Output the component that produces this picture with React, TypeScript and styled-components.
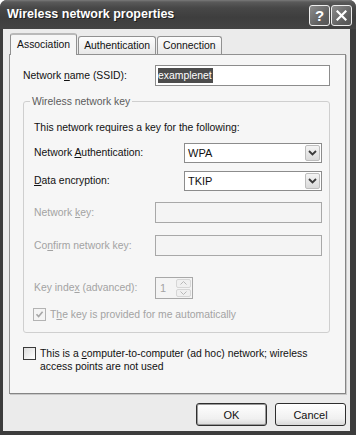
import styled, { createGlobalStyle, css } from 'styled-components';

const GlobalStyle = createGlobalStyle`
  html, body {
    margin: 0;
    padding: 0;
    background: #ffffff;
  }
  body {
    font-family: 'Liberation Sans', Arial, sans-serif;
    font-size: 10.4px;
    color: #111111;
  }
`;

export default function App() {
  return (
    <>
      <GlobalStyle />
      <StyledWindow>
        {/* Title bar */}
        <StyledTitleBar>
          <StyledTitleText>Wireless network properties</StyledTitleText>
          <StyledCaptionButton aria-label='help'>?</StyledCaptionButton>
          <StyledCaptionButton aria-label='close'>
            <svg width='11' height='11' viewBox='0 0 11 11'>
              <path
                d='M1.5 1.5 L9.5 9.5 M9.5 1.5 L1.5 9.5'
                stroke='#ffffff'
                strokeWidth='2.2'
                strokeLinecap='square'
              />
            </svg>
          </StyledCaptionButton>
        </StyledTitleBar>

        <StyledBody>
          {/* Tabs */}
          <StyledTabStrip>
            <StyledTab $active>Association</StyledTab>
            <StyledTab>Authentication</StyledTab>
            <StyledTab>Connection</StyledTab>
          </StyledTabStrip>

          <StyledPanel>
            {/* SSID */}
            <StyledRow $height={21}>
              <StyledLabel $width={132}>
                Network <u>n</u>ame (SSID):
              </StyledLabel>
              <StyledTextBox>
                <StyledSelection>examplenet</StyledSelection>
              </StyledTextBox>
            </StyledRow>

            {/* Wireless network key */}
            <StyledGroup>
              <StyledLegend>Wireless network key</StyledLegend>
              <StyledGroupText>
                This network requires a key for the following:
              </StyledGroupText>

              <StyledRow $height={20} $gap={9}>
                <StyledLabel $width={150}>
                  Network <u>A</u>uthentication:
                </StyledLabel>
                <ComboBox value='WPA' />
              </StyledRow>

              <StyledRow $height={20} $gap={8}>
                <StyledLabel $width={150}>
                  <u>D</u>ata encryption:
                </StyledLabel>
                <ComboBox value='TKIP' />
              </StyledRow>

              <StyledRow $height={21} $gap={11}>
                <StyledLabel $width={121} $disabled>
                  Network <u>k</u>ey:
                </StyledLabel>
                <StyledTextBox $disabled />
              </StyledRow>

              <StyledRow $height={21} $gap={12}>
                <StyledLabel $width={121} $disabled>
                  Co<u>n</u>firm network key:
                </StyledLabel>
                <StyledTextBox $disabled />
              </StyledRow>

              <StyledRow $height={22} $gap={21}>
                <StyledLabel $width={121} $disabled>
                  Key inde<u>x</u> (advanced):
                </StyledLabel>
                <StyledSpinner>
                  <StyledSpinValue>1</StyledSpinValue>
                  <StyledSpinButtons>
                    <StyledSpinButton>
                      <svg width='7' height='4' viewBox='0 0 7 4'>
                        <path d='M0.5 3.5 L3.5 0.5 L6.5 3.5' stroke='#b8b8b8' fill='none' />
                      </svg>
                    </StyledSpinButton>
                    <StyledSpinButton>
                      <svg width='7' height='4' viewBox='0 0 7 4'>
                        <path d='M0.5 0.5 L3.5 3.5 L6.5 0.5' stroke='#b8b8b8' fill='none' />
                      </svg>
                    </StyledSpinButton>
                  </StyledSpinButtons>
                </StyledSpinner>
              </StyledRow>

              <StyledCheckRow $gap={9} $indent={-1}>
                <StyledCheckBox $disabled>
                  <svg width='9' height='9' viewBox='0 0 9 9'>
                    <path
                      d='M1.5 4.2 L3.6 6.5 L7.6 1.8'
                      stroke='#a6a6a6'
                      strokeWidth='1.6'
                      fill='none'
                    />
                  </svg>
                </StyledCheckBox>
                <StyledCheckText $disabled>
                  T<u>h</u>e key is provided for me automatically
                </StyledCheckText>
              </StyledCheckRow>
            </StyledGroup>

            {/* Ad hoc */}
            <StyledCheckRow $gap={14} $indent={0}>
              <StyledCheckBox />
              <StyledCheckText $width={270}>
                This is a <u>c</u>omputer-to-computer (ad hoc) network; wireless
                access points are not used
              </StyledCheckText>
            </StyledCheckRow>
          </StyledPanel>

          {/* Dialog buttons */}
          <StyledButtonRow>
            <StyledButton $isDefault>OK</StyledButton>
            <StyledButton>Cancel</StyledButton>
          </StyledButtonRow>
        </StyledBody>
      </StyledWindow>
    </>
  );
}

function ComboBox({ value }: { value: string }) {
  return (
    <StyledCombo>
      <StyledComboValue>{value}</StyledComboValue>
      <StyledDropButton>
        <svg width='9' height='6' viewBox='0 0 9 6'>
          <path
            d='M1 1 L4.5 4.5 L8 1'
            stroke='#3a3a3a'
            strokeWidth='1.8'
            fill='none'
          />
        </svg>
      </StyledDropButton>
    </StyledCombo>
  );
}

const StyledWindow = styled.div`
  width: 356px;
  height: 435px;
  display: flex;
  flex-direction: column;
  background: #3c3c3c;
  border-radius: 7px 7px 0 0;
  overflow: hidden;
`;

const StyledTitleBar = styled.div`
  height: 29px;
  flex: none;
  display: flex;
  align-items: center;
  padding: 0 4px 0 7px;
  background: linear-gradient(
    #7a7a7a 0,
    #5a5a5a 2px,
    #474747 8px,
    #3e3e3e 60%,
    #444444 100%
  );
  color: #ffffff;
  font: bold 12.5px 'Liberation Sans', Arial, sans-serif;
`;

const StyledTitleText = styled.div`
  flex: 1;
  text-shadow: 1px 1px 0 #1e1e1e;
  padding-bottom: 1px;
`;

const StyledCaptionButton = styled.div`
  width: 21px;
  height: 21px;
  box-sizing: border-box;
  margin-left: 1px;
  margin-top: 1px;
  border: 1px solid #eeeeee;
  border-radius: 3px;
  background: linear-gradient(135deg, #8c8c8c, #5e5e5e 70%, #555555);
  display: flex;
  align-items: center;
  justify-content: center;
  color: #ffffff;
  font: bold 15px 'Liberation Sans', Arial, sans-serif;
`;

const StyledBody = styled.div`
  flex: 1;
  display: flex;
  flex-direction: column;
  margin: 0 6px 4px 3px;
  padding: 4px 4px 5px 6px;
  background: #ebebeb;
`;

const StyledTabStrip = styled.div`
  height: 21px;
  display: flex;
  align-items: flex-end;
  padding-left: 1px;
  position: relative;
  z-index: 1;
`;

const StyledTab = styled.div<{ $active?: boolean }>`
  height: 18px;
  box-sizing: border-box;
  display: flex;
  align-items: center;
  padding: 0 5px;
  margin-right: 1px;
  border: 1px solid #919191;
  border-bottom: none;
  border-radius: 3px 3px 0 0;
  background: linear-gradient(#fdfdfd, #e8e8e8);
  ${({ $active }) =>
    $active &&
    css`
      height: 22px;
      margin-bottom: -1px;
      padding: 0 6px 2px;
      background: #f6f6f6;
      border-top: 2px solid #b9b9b9;
    `}
`;

const StyledPanel = styled.div`
  flex: 1;
  display: flex;
  flex-direction: column;
  padding: 10px 15px 0 13px;
  background: #f6f6f6;
  border: 1px solid #919191;
  border-right-color: #858585;
  border-bottom-color: #858585;
  box-shadow: 1px 1px 0 #c8c8c8;
`;

const StyledRow = styled.div<{ $height: number; $gap?: number }>`
  display: flex;
  align-items: center;
  height: ${({ $height }) => $height}px;
  margin-top: ${({ $gap }) => $gap ?? 0}px;
`;

const StyledLabel = styled.div<{ $width: number; $disabled?: boolean }>`
  width: ${({ $width }) => $width}px;
  flex: none;
  color: ${({ $disabled }) => ($disabled ? '#a3a3a3' : '#111111')};
  padding-bottom: 1px;
`;

const StyledTextBox = styled.div<{ $disabled?: boolean }>`
  flex: 1;
  align-self: stretch;
  display: flex;
  align-items: center;
  padding: 0 2px;
  border: 1px solid #8c8c8c;
  background: #ffffff;
  ${({ $disabled }) =>
    $disabled &&
    css`
      border-color: #a8a8a8;
      background: #f4f4f4;
    `}
`;

const StyledSelection = styled.span`
  background: #4c4c4c;
  color: #ffffff;
  line-height: 15px;
  padding: 0 1px 0 0;
`;

const StyledGroup = styled.fieldset`
  margin: 9px 0 0;
  padding: 0 7px 11px 10px;
  min-width: 0;
  border: 1px solid #cfcfcf;
  border-radius: 3px;
`;

const StyledLegend = styled.legend`
  padding: 0 2px;
  margin-left: -4px;
  line-height: 13px;
  color: #5c5c5c;
`;

const StyledGroupText = styled.div`
  margin-top: 13px;
  line-height: 13px;
`;

const StyledCombo = styled.div`
  flex: 1;
  align-self: stretch;
  display: flex;
  align-items: center;
  border: 1px solid #8c8c8c;
  background: #ffffff;
  padding-left: 3px;
`;

const StyledComboValue = styled.div`
  flex: 1;
  font-size: 11px;
`;

const StyledDropButton = styled.div`
  width: 15px;
  align-self: stretch;
  margin: 1px;
  box-sizing: border-box;
  border: 1px solid #bdbdbd;
  border-radius: 2px;
  background: linear-gradient(#f4f4f4, #dadada);
  display: flex;
  align-items: center;
  justify-content: center;
`;

const StyledSpinner = styled.div`
  width: 38px;
  align-self: stretch;
  box-sizing: border-box;
  display: flex;
  border: 1px solid #a8a8a8;
  background: #f4f4f4;
`;

const StyledSpinValue = styled.div`
  flex: 1;
  padding-left: 4px;
  display: flex;
  align-items: center;
  color: #a3a3a3;
  font-size: 11px;
`;

const StyledSpinButtons = styled.div`
  width: 15px;
  display: flex;
  flex-direction: column;
  gap: 1px;
  padding: 1px;
`;

const StyledSpinButton = styled.div`
  flex: 1;
  border: 1px solid #d6d6d6;
  border-radius: 2px;
  background: #f0f0f0;
  display: flex;
  align-items: center;
  justify-content: center;
`;

const StyledCheckRow = styled.div<{ $gap: number; $indent: number }>`
  display: flex;
  align-items: flex-start;
  gap: 4px;
  margin-top: ${({ $gap }) => $gap}px;
  margin-left: ${({ $indent }) => $indent}px;
`;

const StyledCheckBox = styled.div<{ $disabled?: boolean }>`
  width: 13px;
  height: 13px;
  flex: none;
  box-sizing: border-box;
  display: flex;
  align-items: center;
  justify-content: center;
  border: 1px solid #3a3a3a;
  background: linear-gradient(135deg, #dcdcdc, #ffffff);
  ${({ $disabled }) =>
    $disabled &&
    css`
      border-color: #b3b3b3;
      background: #f4f4f4;
    `}
`;

const StyledCheckText = styled.div<{ $disabled?: boolean; $width?: number }>`
  line-height: 13px;
  color: ${({ $disabled }) => ($disabled ? '#a3a3a3' : '#111111')};
  ${({ $width }) =>
    $width &&
    css`
      width: ${$width}px;
    `}
`;

const StyledButtonRow = styled.div`
  display: flex;
  justify-content: flex-end;
  gap: 8px;
  margin-top: 9px;
`;

const StyledButton = styled.div<{ $isDefault?: boolean }>`
  width: 71px;
  height: 23px;
  box-sizing: border-box;
  display: flex;
  align-items: center;
  justify-content: center;
  border: 1px solid #2e2e2e;
  border-radius: 3px;
  background: linear-gradient(#ffffff, #f0f0f0 70%, #d8d8d8);
  font-size: 11px;
  ${({ $isDefault }) =>
    $isDefault &&
    css`
      box-shadow: inset 0 0 0 1px #9a9a9a;
    `}
`;
